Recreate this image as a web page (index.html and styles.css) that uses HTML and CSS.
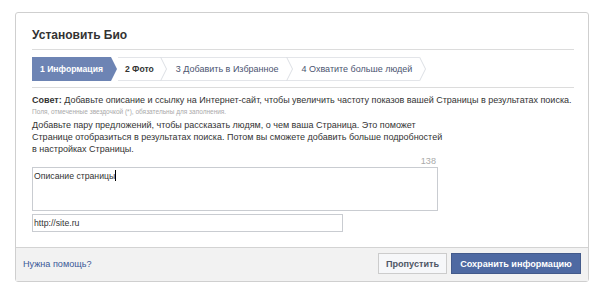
FILE: index.html
```html
<!DOCTYPE html>
<html lang="ru">
<head>
  <meta charset="UTF-8" />
  <title>Установить Био</title>
  <link rel="stylesheet" href="styles.css">
</head>
<body>
  <div class="dialog">
    <div class="dialog-body">
      <h2 class="title">Установить Био</h2>

      <div class="steps">
        <div class="step active">
          <span class="label">1 Информация</span>
          <svg class="chev" width="7" height="24" viewBox="0 0 7 24"><polygon points="0,0 6,12 0,24" fill="#6d84b4" /></svg>
        </div>
        <div class="step next">
          <span class="label">2 Фото</span>
          <svg class="chev" width="7" height="24" viewBox="0 0 7 24"><line x1="0" y1="0.5" x2="7" y2="0.5" stroke="#e3e5e9" /><line x1="0" y1="23.5" x2="7" y2="23.5" stroke="#e3e5e9" /><polyline points="0.5,0 6.5,12 0.5,24" fill="none" stroke="#dcdfe4" /></svg>
        </div>
        <div class="step">
          <span class="label">3 Добавить в Избранное</span>
          <svg class="chev" width="7" height="24" viewBox="0 0 7 24"><line x1="0" y1="0.5" x2="7" y2="0.5" stroke="#e3e5e9" /><line x1="0" y1="23.5" x2="7" y2="23.5" stroke="#e3e5e9" /><polyline points="0.5,0 6.5,12 0.5,24" fill="none" stroke="#dcdfe4" /></svg>
        </div>
        <div class="step">
          <span class="label">4 Охватите больше людей</span>
          <svg class="chev" width="7" height="24" viewBox="0 0 7 24"><polyline points="0.5,0 6.5,12 0.5,24" fill="none" stroke="#dcdfe4" /></svg>
        </div>
      </div>

      <div class="content">
        <div class="tip"><b>Совет:</b> Добавьте описание и ссылку на Интернет-сайт, чтобы увеличить частоту показов вашей Страницы в результатах поиска.</div>
        <div class="required">Поля, отмеченные звездочкой (*), обязательны для заполнения.</div>
        <p class="intro">Добавьте пару предложений, чтобы рассказать людям, о чем ваша Страница. Это поможет Странице отобразиться в результатах поиска. Потом вы сможете добавить больше подробностей в настройках Страницы.</p>

        <div class="field">
          <div class="counter">138</div>
          <div class="textarea">Описание страницы<span class="caret"></span></div>
          <div class="input">http://site.ru</div>
        </div>
      </div>
    </div>

    <div class="dialog-footer">
      <a href="#" class="help">Нужна помощь?</a>
      <div class="buttons">
        <button class="btn skip">Пропустить</button>
        <button class="btn save">Сохранить информацию</button>
      </div>
    </div>
  </div>
</body>
</html>
```

FILE: styles.css
```css
* {
  box-sizing: border-box;
  font-family: 'Liberation Sans', Arial, sans-serif;
}
body {
  margin: 0;
  background: #fff;
  color: #333;
  font-size: 9.1px;
}
.dialog {
  margin: 12px 15px 0;
  width: 574px;
  height: 270px;
  border: 1px solid #cfcfcf;
  border-radius: 3px;
  display: flex;
  flex-direction: column;
}
.dialog-body {
  padding: 14px 14px 0 16px;
  flex: 1;
}
.title {
  margin: 0;
  font-size: 12px;
  line-height: 16px;
  font-weight: bold;
  color: #333;
  padding-bottom: 6px;
  border-bottom: 1px solid #dcdcdc;
}
.steps {
  display: flex;
  margin-top: 7px;
  height: 24px;
}
.step {
  display: flex;
  height: 24px;
}
.step .label {
  display: flex;
  align-items: center;
  height: 24px;
  padding: 0 7px 0 9px;
  border-top: 1px solid #e3e5e9;
  border-bottom: 1px solid #e3e5e9;
  color: #4b5470;
  font-size: 9px;
  white-space: nowrap;
}
.step.active .label {
  background: #6d84b4;
  border-color: #6d84b4;
  color: #fff;
  font-weight: bold;
  font-size: 8.6px;
  padding: 0 8px;
}
.step.next .label {
  color: #333;
  font-weight: bold;
  font-size: 8.6px;
  padding: 0 6px 0 7px;
}
.chev {
  display: block;
  flex-shrink: 0;
}
.content {
  margin-top: 6px;
  border-top: 1px solid #dcdcdc;
  padding-top: 6px;
}
.tip {
  font-size: 9px;
  line-height: 13px;
  white-space: nowrap;
}
.required {
  font-size: 6.5px;
  line-height: 10px;
  color: #aaa;
}
.intro {
  margin: 2px 0 0;
  max-width: 416px;
  font-size: 9px;
  line-height: 12px;
}
.field {
  width: 406px;
}
.counter {
  text-align: right;
  color: #aaa;
  line-height: 12px;
  padding-right: 2px;
}
.textarea {
  height: 44px;
  border: 1px solid #c9ccd1;
  padding: 2px 1px;
  font-size: 8.7px;
  line-height: 13px;
}
.caret {
  display: inline-block;
  width: 1px;
  height: 11px;
  background: #000;
  vertical-align: -2px;
}
.input {
  margin-top: 3px;
  width: 311px;
  height: 18px;
  border: 1px solid #c9ccd1;
  padding: 0 1px;
  font-size: 8.7px;
  line-height: 16px;
}
.dialog-footer {
  display: flex;
  justify-content: space-between;
  align-items: center;
  background: #f2f2f2;
  border-top: 1px solid #d3d3d3;
  padding: 5px 7px 7px 7px;
  height: 34px;
}
.help {
  color: #3b5998;
  text-decoration: none;
}
.buttons {
  display: flex;
  gap: 4px;
}
.btn {
  height: 21px;
  font-size: 9.1px;
  font-weight: bold;
  border: 1px solid #ccc;
  padding: 0;
  cursor: pointer;
}
.btn.skip {
  width: 69px;
  background: #f6f7f9;
  color: #4e5665;
}
.btn.save {
  width: 130px;
  background: #4e69a2;
  border-color: #435a8b;
  color: #fff;
}
```
